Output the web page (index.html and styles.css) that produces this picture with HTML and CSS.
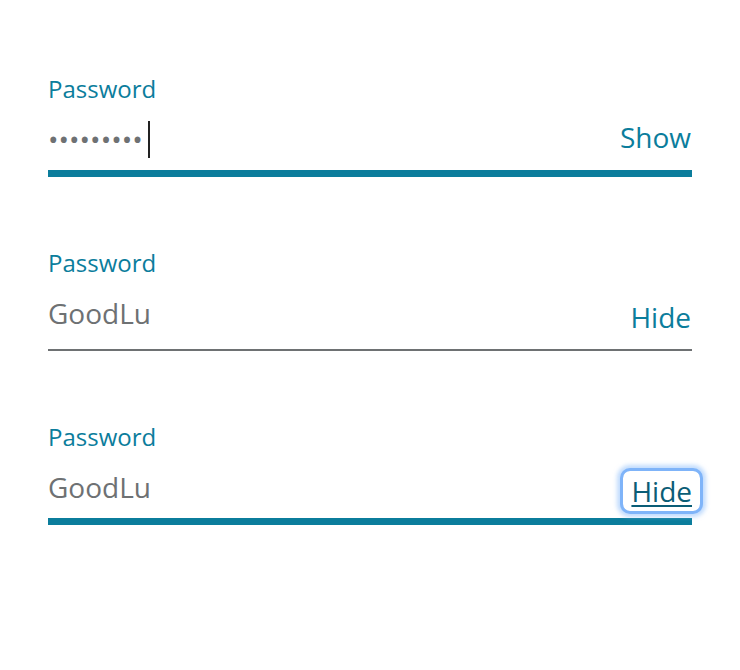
FILE: index.html
```html
<!DOCTYPE html>
<html>
<head>
<meta charset="utf-8">
<link rel="stylesheet" href="styles.css">
</head>
<body>
<main class="page">
  <div class="field field-active">
    <label class="label">Password</label>
    <div class="row">
      <span class="value">•••••••••<span class="caret"></span></span>
      <span class="toggle toggle-show">Show</span>
    </div>
  </div>
  <div class="field">
    <label class="label">Password</label>
    <div class="row">
      <span class="value">GoodLu</span>
      <span class="toggle toggle-hide">Hide</span>
    </div>
  </div>
  <div class="field field-active">
    <label class="label">Password</label>
    <div class="row">
      <span class="value">GoodLu</span>
      <span class="toggle toggle-hide toggle-focus">Hide</span>
    </div>
  </div>
</main>
</body>
</html>
```
FILE: styles.css
```css
html, body { margin: 0; padding: 0; background: #fff; }
body { font-family: "Open Sans", sans-serif; }
.page { padding: 77px 48px 0 48px; width: 644px; }
.field { height: 174px; }
.label { display: block; color: #0b7d9c; font-size: 24px; line-height: 24px; }
.row {
  margin-top: 18px;
  height: 58px;
  box-sizing: border-box;
  border-bottom: 2px solid #6e7173;
  display: flex;
  justify-content: space-between;
  align-items: flex-start;
}
.field-active .row { border-bottom: 7px solid #0b7d9c; }
.value { color: #6e7173; font-size: 28px; line-height: 40px; display: flex; align-items: center; }
.caret { display: inline-block; width: 2px; height: 37px; background: #222; margin-left: 5px; }
.toggle { color: #0b7d9c; font-size: 28px; line-height: 40px; margin-right: 1px; }
.toggle-show { margin-top: -2px; }
.toggle-hide { margin-top: 4px; }
.toggle-focus {
  color: #0a5d76;
  text-decoration: underline;
  text-decoration-thickness: 2px;
  text-underline-offset: 3px;
  padding: 0 8px;
  margin-right: -8px;
  border-radius: 7px;
  box-shadow: 0 0 0 3px #7fb4f9, 0 0 4px 6px rgba(150, 195, 252, 0.6);
}
```
